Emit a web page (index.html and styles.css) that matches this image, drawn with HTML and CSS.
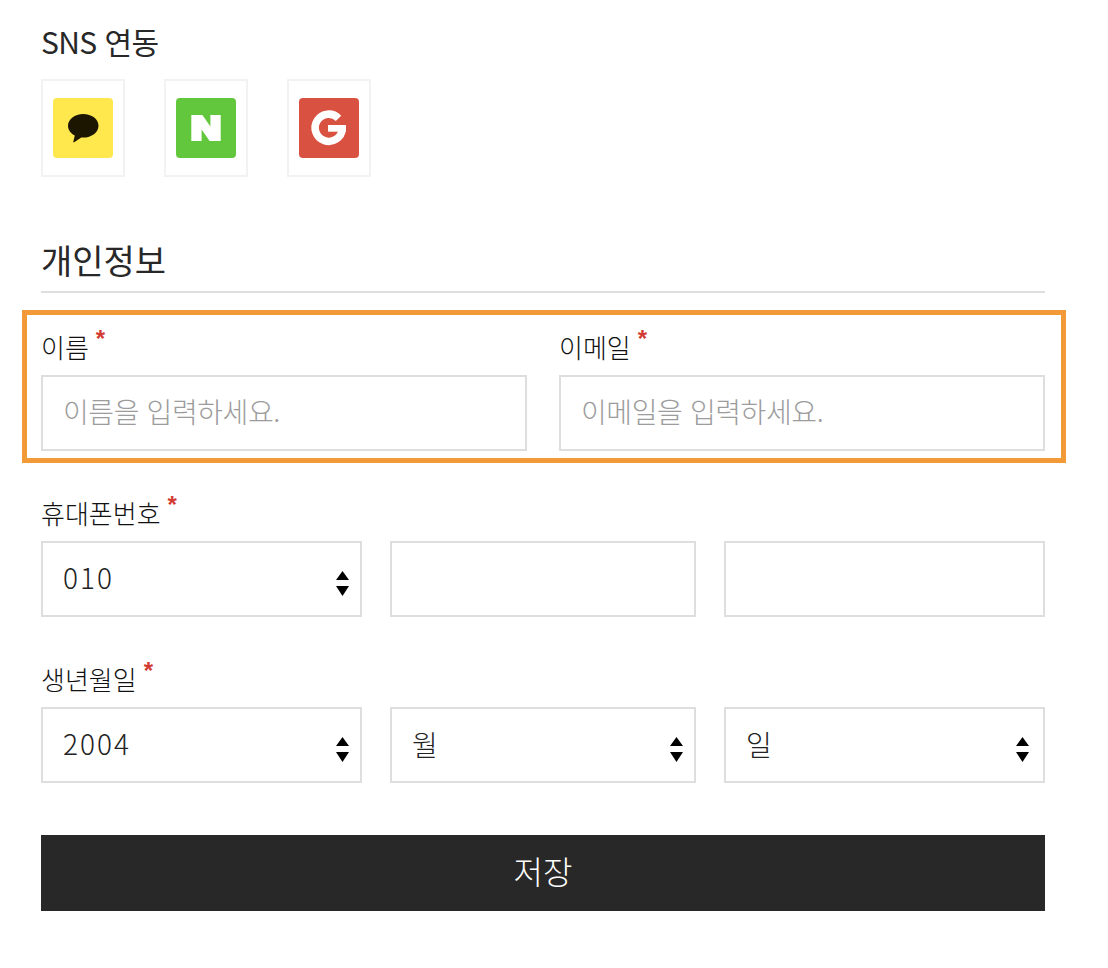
FILE: index.html
```html
<!DOCTYPE html>
<html lang="ko">
<head>
<meta charset="utf-8">
<title>개인정보</title>
<link rel="stylesheet" href="styles.css">
</head>
<body>
<main class="page">
  <section class="sns">
    <h3 class="sns-title">SNS 연동</h3>
    <div class="sns-list">
      <a class="sns-box"><svg class="sns-icon" viewBox="0 0 60 60"><rect width="60" height="60" rx="4" fill="#ffe84d"/><path d="M30.200 16C21.800 16 15 21.200 15 27.700c0 4.100 2.700 7.700 6.800 9.800l-1.500 6.200c-.1.600.4.900.9.600l7.100-4.800c.6 0 1.300.1 1.900.1 8.400 0 15.300-5.300 15.300-11.900S38.600 16 30.200 16z" fill="#1c1500"/></svg></a>
      <a class="sns-box"><svg class="sns-icon" viewBox="0 0 60 60"><rect width="60" height="60" rx="4" fill="#62c73c"/><path d="M15.300 17H26.400L34.400 28.500V17H44.700V43H33.600L25.600 31.500V43H15.300z" fill="#fff"/></svg></a>
      <a class="sns-box"><svg class="sns-icon" viewBox="0 0 60 60"><rect width="60" height="60" rx="4" fill="#d95140"/><path d="M39.500 20.300A13.600 13.600 0 1 0 43.300 31" fill="none" stroke="#fff" stroke-width="7.600"/><path d="M29 27H47V33.700H29z" fill="#fff"/></svg></a>
    </div>
  </section>

  <h2 class="section-title">개인정보</h2>

  <div class="highlight">
    <div class="two-col">
      <div class="field">
        <label class="label">이름<span class="req">*</span></label>
        <input class="control control-text" type="text" placeholder="이름을 입력하세요.">
      </div>
      <div class="field">
        <label class="label">이메일<span class="req">*</span></label>
        <input class="control control-text" type="text" placeholder="이메일을 입력하세요.">
      </div>
    </div>
  </div>

  <div class="field group-phone">
    <label class="label">휴대폰번호<span class="req">*</span></label>
    <div class="three-col">
      <div class="select-wrap">
        <select class="control control-num"><option>010</option></select>
        <svg class="arrows" viewBox="0 0 13 25"><path d="M6.500 0L13 9H0zM0 15H13L6.500 25z"/></svg>
      </div>
      <input class="control control-text" type="text">
      <input class="control control-text" type="text">
    </div>
  </div>

  <div class="field group-birth">
    <label class="label">생년월일<span class="req">*</span></label>
    <div class="three-col">
      <div class="select-wrap">
        <select class="control control-num"><option>2004</option></select>
        <svg class="arrows" viewBox="0 0 13 25"><path d="M6.500 0L13 9H0zM0 15H13L6.500 25z"/></svg>
      </div>
      <div class="select-wrap">
        <select class="control"><option>월</option></select>
        <svg class="arrows" viewBox="0 0 13 25"><path d="M6.500 0L13 9H0zM0 15H13L6.500 25z"/></svg>
      </div>
      <div class="select-wrap">
        <select class="control"><option>일</option></select>
        <svg class="arrows arrows-day" viewBox="0 0 13 25"><path d="M6.500 0L13 9H0zM0 15H13L6.500 25z"/></svg>
      </div>
    </div>
  </div>

  <button class="save" type="button">저장</button>
</main>
</body>
</html>
```
FILE: styles.css
```css
* { box-sizing: border-box; }

html, body { margin: 0; background: #fff; }

body {
  font-family: "Noto Sans CJK KR", "Noto Sans", sans-serif;
  color: #282828;
}

.page {
  width: 1108px;
  height: 968px;
  padding: 22px 63px 0 41px;
  overflow: hidden;
}

.sns-title {
  margin: 0 0 19px;
  font-size: 30px;
  line-height: 38px;
  font-weight: 400;
  letter-spacing: -0.6px;
}

.sns-list { display: flex; gap: 39px; }

.sns-box {
  display: flex;
  width: 84px;
  height: 98px;
  padding-top: 17px;
  justify-content: center;
  border: 2px solid #f2f2f2;
}

.sns-icon { width: 60px; height: 60px; display: block; }

.section-title {
  margin: 62px 0 17px;
  padding-bottom: 8px;
  border-bottom: 2px solid #dedede;
  font-size: 34px;
  line-height: 42px;
  height: 54px;
  font-weight: 400;
}

.highlight {
  margin: 0 -21px 31px -19px;
  padding: 13px 16px 7px 14px;
  border: 5px solid #f29a38;
}

.two-col {
  display: grid;
  grid-template-columns: 486px 486px;
  gap: 32px;
}

.three-col {
  display: grid;
  grid-template-columns: 321px 306px 321px;
  gap: 28px;
}

.label {
  display: block;
  height: 38px;
  margin-bottom: 9px;
  font-size: 26px;
  line-height: 38px;
  font-weight: 300;
  color: #111;
}

.req {
  margin-left: 7px;
  font-family: "Liberation Sans", sans-serif;
  font-size: 24px;
  font-weight: 700;
  line-height: 0;
  color: #d33a32;
  vertical-align: 11px;
}

.control {
  display: block;
  width: 100%;
  height: 76px;
  padding: 0 20px 3px;
  border: 2px solid #dedede;
  border-radius: 0;
  background: #fff;
  font-family: "Noto Sans CJK KR", "Noto Sans", sans-serif;
  font-size: 28px;
  font-weight: 300;
  letter-spacing: -0.4px;
  color: #222;
  outline: none;
  appearance: none;
}

.control-text { padding-bottom: 5px; }

.control-num {
  padding-bottom: 5px;
  letter-spacing: 2px;
}

.control::placeholder { color: #9c9c9c; opacity: 1; }

.select-wrap { position: relative; }

.arrows {
  position: absolute;
  top: 30px;
  right: 13px;
  width: 13px;
  height: 25px;
  fill: #000;
  pointer-events: none;
}

.arrows-day { right: 16px; }

.group-phone { margin-bottom: 43px; }

.group-birth { margin-bottom: 52px; }

.save {
  display: block;
  width: 100%;
  height: 76px;
  padding: 0 0 6px;
  border: 0;
  background: #282828;
  color: #fff;
  font-family: "Noto Sans CJK KR", "Noto Sans", sans-serif;
  font-size: 32px;
  font-weight: 300;
}
```
